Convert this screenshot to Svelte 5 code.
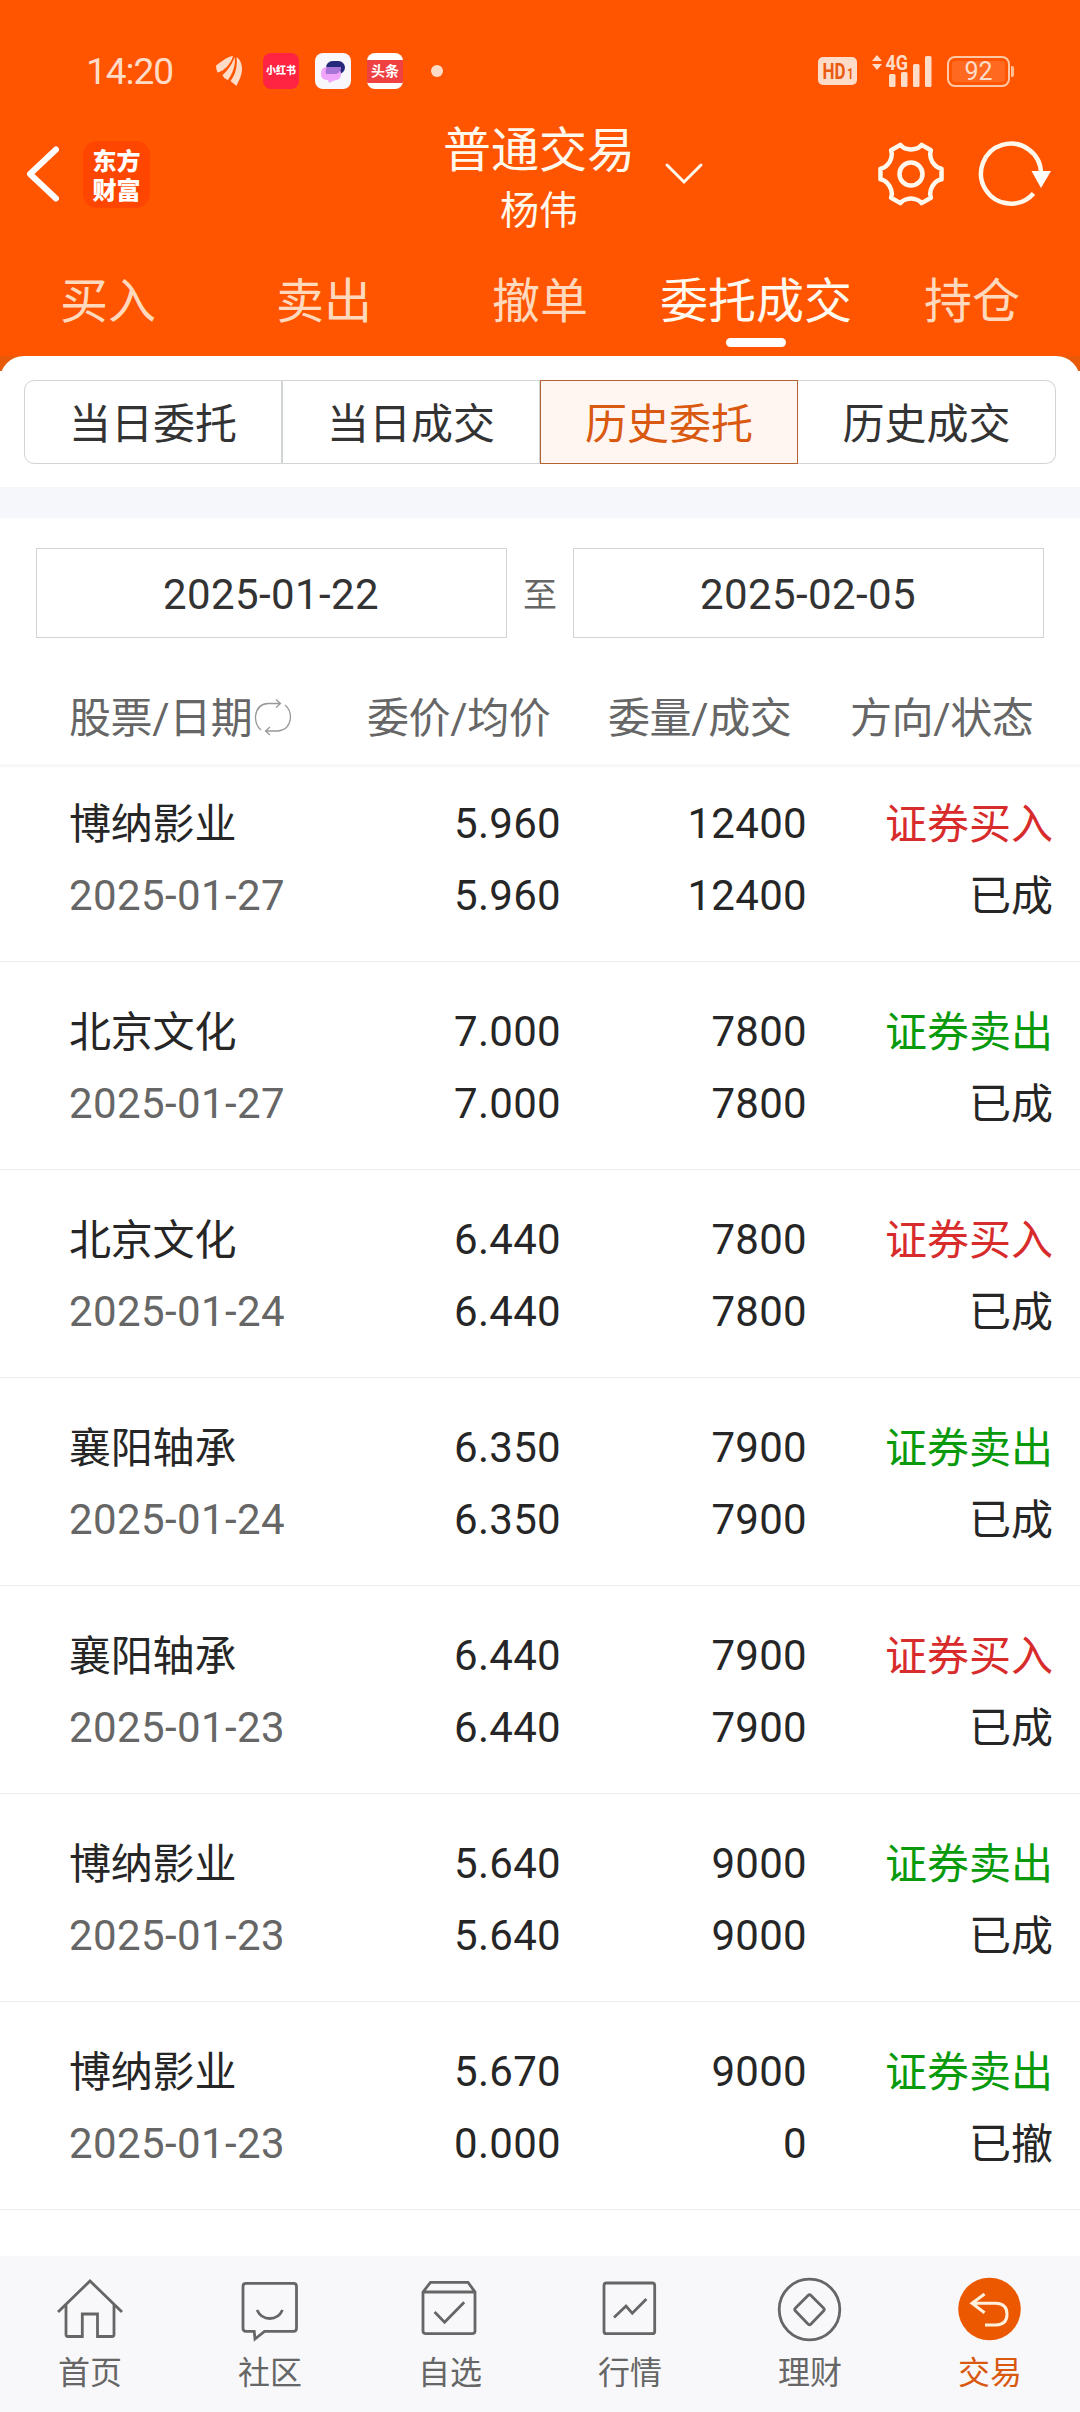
<script>
  const tabs = ['买入', '卖出', '撤单', '委托成交', '持仓'];
  const segments = ['当日委托', '当日成交', '历史委托', '历史成交'];
  const orders = [
    { name: '博纳影业', date: '2025-01-27', price: '5.960', avg: '5.960', qty: '12400', done: '12400', side: 'buy', status: '已成' },
    { name: '北京文化', date: '2025-01-27', price: '7.000', avg: '7.000', qty: '7800', done: '7800', side: 'sell', status: '已成' },
    { name: '北京文化', date: '2025-01-24', price: '6.440', avg: '6.440', qty: '7800', done: '7800', side: 'buy', status: '已成' },
    { name: '襄阳轴承', date: '2025-01-24', price: '6.350', avg: '6.350', qty: '7900', done: '7900', side: 'sell', status: '已成' },
    { name: '襄阳轴承', date: '2025-01-23', price: '6.440', avg: '6.440', qty: '7900', done: '7900', side: 'buy', status: '已成' },
    { name: '博纳影业', date: '2025-01-23', price: '5.640', avg: '5.640', qty: '9000', done: '9000', side: 'sell', status: '已成' },
    { name: '博纳影业', date: '2025-01-23', price: '5.670', avg: '0.000', qty: '9000', done: '0', side: 'sell', status: '已撤' }
  ];
  const nav = ['首页', '社区', '自选', '行情', '理财', '交易'];

  // Six-toothed gear outline: tooth corners joined by concave curves
  const gear = (() => {
    const pt = (r, deg) => {
      const a = (deg * Math.PI) / 180;
      return `${(34 + r * Math.cos(a)).toFixed(2)} ${(34 + r * Math.sin(a)).toFixed(2)}`;
    };
    let d = '';
    for (let i = 0; i < 6; i++) {
      const c = i * 60;
      d += `${i ? 'L' : 'M'}${pt(31, c - 10)}L${pt(31, c + 10)}`;
      d += `Q${pt(27, c + 13)} ${pt(25.4, c + 21)}Q${pt(24, c + 30)} ${pt(25.4, c + 39)}Q${pt(27, c + 47)} ${pt(31, c + 50)}`;
    }
    return d + 'Z';
  })();
</script>

<div class="screen">
  <header>
    <div class="status">
      <span class="time">14:20</span>
      <svg class="leaf" viewBox="0 0 26 30">
        <path d="M17 0C10 1 4 7 0 9.500Q0 13 1.500 16.500C8 15 15 8 17 0Z" />
        <path d="M18.500 1C16 9 11 15 6.500 19Q8 23 12 24C17 17 20 8 18.500 1Z" />
        <path d="M20.500 1C24 3 26 8 26 13C26 20 22 26 20.500 30L14.500 25C20 18 21.500 9 20.500 1Z" />
      </svg>
      <span class="app xhs">小红书</span>
      <svg class="app" viewBox="0 0 36 36">
        <rect width="36" height="36" rx="8" fill="#f8f7fc" />
        <rect x="11" y="8" width="19" height="13" rx="6.5" fill="#26287c" />
        <path d="M12 14H19Q26 14 26 21Q26 27 19 27.500L14 30L13 27Q6 27 6 21Q6 14 12 14Z" fill="#f0a5fb" />
        <path d="M12 14H26V16Q24 21 20 21H11Q10 16 12 14Z" fill="#a874d8" />
      </svg>
      <span class="app news"><b>头条</b></span>
      <i class="dot"></i>
      <div class="spacer"></div>
      <svg class="hd" viewBox="0 0 39 28">
        <rect width="39" height="28" rx="5" />
        <text x="4.500" y="22" textLength="23" lengthAdjust="spacingAndGlyphs">HD</text>
        <text class="sm" x="29" y="22" textLength="6.500" lengthAdjust="spacingAndGlyphs">1</text>
      </svg>
      <svg class="signal" viewBox="0 0 60 34">
        <path d="M0 7L5 1L10 7ZM0 10H10L5 16Z" />
        <rect x="17" y="20" width="6.500" height="13" rx="1.500" />
        <rect x="29" y="18" width="6.500" height="15" rx="1.500" />
        <rect x="41" y="10" width="6.500" height="23" rx="1.500" />
        <rect x="53" y="2" width="6.500" height="31" rx="1.500" />
        <text x="13.500" y="16" textLength="22.500" lengthAdjust="spacingAndGlyphs">4G</text>
      </svg>
      <span class="battery"><span>92</span></span><i class="cap"></i>
    </div>

    <div class="bar">
      <div class="left">
        <svg class="back" viewBox="0 0 36 60"><path d="M31 5.500L5 30L31 54.500" /></svg>
        <div class="logo">东方<br />财富</div>
      </div>
      <div class="title">
        <h1>普通交易</h1>
        <p>杨伟</p>
      </div>
      <div class="right">
        <svg class="chev" viewBox="0 0 40 24"><path d="M3 3L20 20L37 3" /></svg>
        <svg class="gear" viewBox="0 0 68 68"><path d={gear} /><circle cx="34" cy="34" r="11.500" /></svg>
        <svg class="reload" viewBox="0 0 74 68"><path d="M57.500 53.500A30 30 0 1 1 65 33" /><path class="tip" d="M55.500 31H75L65 48Z" /></svg>
      </div>
    </div>

    <nav class="tabs">
      {#each tabs as t}
        <span class:on={t === '委托成交'}>{t}</span>
      {/each}
    </nav>
  </header>

  <div class="sheet">
    <section class="segs">
      {#each segments as s}
        <span class:on={s === '历史委托'}>{s}</span>
      {/each}
    </section>
  </div>
  <div class="band"></div>

  <section class="range">
    <span class="date">2025-01-22</span>
    <span class="to">至</span>
    <span class="date">2025-02-05</span>
  </section>

  <div class="thead">
    <span>股票/日期<svg viewBox="0 0 38 38"><path d="M7 32Q1 27 1.500 18Q3 6 14 5.500H26M22 1.500L26.500 5.500L22 9.500M31 7Q37 12 36.500 20Q35 32 24 33H12M16 29L11.500 33L16 37" /></svg></span>
    <span>委价/均价</span>
    <span>委量/成交</span>
    <span>方向/状态</span>
  </div>

  <main>
    {#each orders as o}
      <article>
        <div class="name"><span class="cjk">{o.name}</span><span class="day">{o.date}</span></div>
        <div><span>{o.price}</span><span>{o.avg}</span></div>
        <div><span>{o.qty}</span><span>{o.done}</span></div>
        <div class="side"><span class={o.side}>{o.side === 'buy' ? '证券买入' : '证券卖出'}</span><span>{o.status}</span></div>
      </article>
    {/each}
  </main>

  <footer>
    {#each nav as n, i}
      <div class="item" class:on={n === '交易'}>
        <svg viewBox="0 0 72 72">
          {#if i === 0}
            <path d="M4 39L36 8L68 39M12 32V61.500Q12 63.500 14 63.500H28.300V41H43.500V63.500H58Q60 63.500 60 61.500V32" />
          {:else if i === 1}
            <path d="M12 10.300H59.500Q62.500 10.300 62.500 13.300V55.300Q62.500 58.300 59.500 58.300H30.500L21 66L20.200 58.300H12Q9 58.300 9 55.300V13.300Q9 10.300 12 10.300Z" />
            <path d="M23 37Q27 45.500 35.800 45.500T48.500 37" />
          {:else if i === 2}
            <path d="M9 19L16.500 9.300H54L61 19V58Q61 60.700 58 60.700H12Q9 60.700 9 58ZM9 19H61M20.600 39L30.600 49.300L50.200 29.300" />
          {:else if i === 3}
            <rect x="10" y="10" width="50.700" height="50.700" rx="2.500" />
            <path d="M20 44.500L32 33L38.300 40.300L52.400 26" />
          {:else if i === 4}
            <circle cx="35.500" cy="36.500" r="30.300" />
            <path d="M34 22.500Q35.500 21 37 22.500L49.500 35Q51 36.500 49.500 38L37 51Q35.500 52.500 34 51L21.500 38Q20 36.500 21.500 35Z" />
          {:else}
            <circle class="disc" cx="35.500" cy="36" r="31.300" />
            <path class="arrow" d="M30.600 21L18 30.300L30.600 39.700M18.500 30.300H42Q53 30.800 53 41.200T42 52H31" />
          {/if}
        </svg>
        <span>{n}</span>
      </div>
    {/each}
  </footer>
</div>

<style>
  :global(body) { background: #fff; }
  .screen {
    width: 1080px; height: 2412px; display: flex; flex-direction: column; overflow: hidden;
    background: #fff; color: #262626;
    font: 42px/1 Roboto, "Noto Sans CJK SC", sans-serif;
  }
  * { box-sizing: border-box; }
  h1, p { margin: 0; font-weight: 400; }
  svg { display: block; flex: none; fill: none; overflow: visible; }

  header { height: 356px; flex: none; background: #ff5500; color: #fff8ec; display: flex; flex-direction: column; }
  .status { height: 106px; padding: 36px 66px 0 86px; display: flex; align-items: center; color: #ffdcc8; }
  .time { font-size: 37px; width: 130px; letter-spacing: -1px; }
  .leaf { width: 26px; height: 30px; fill: #ffdcc8; margin-right: 21px; }
  .app { width: 36px; height: 36px; margin-right: 16px; border-radius: 8px; flex: none; display: flex; align-items: center; justify-content: center; }
  .xhs { background: #ff2442; color: #fff; font-size: 10px; font-weight: 900; white-space: nowrap; }
  .news { background: #fff; overflow: hidden; }
  .news b { width: 36px; height: 23px; background: #f04142; color: #fff; font-size: 14px; line-height: 22px; text-align: center; white-space: nowrap; }
  .dot { width: 12px; height: 12px; border-radius: 50%; background: #ffdcc8; margin-left: 12px; }
  .spacer { flex: 1; }
  .hd { width: 39px; height: 28px; fill: #ffdcc8; margin-right: 15px; }
  .hd text { font: 700 22px Roboto, sans-serif; fill: #e85a10; }
  .hd .sm { font-size: 15px; }
  .signal { width: 60px; height: 34px; fill: #ffdcc8; margin-right: 15px; }
  .signal text { font: 700 21px Roboto, sans-serif; }
  .battery { width: 63px; height: 31px; border: 2px solid #ffc8a4; border-radius: 8px; padding: 3px; }
  .battery span { display: block; height: 21px; background: #ff6a20; border-radius: 3px; text-align: center; font-size: 25px; line-height: 22px; }
  .cap { width: 3px; height: 11px; background: #ffbf94; margin-left: 1px; border-radius: 0 2px 2px 0; }

  .bar { height: 136px; display: grid; grid-template-columns: 1fr 200px 1fr; align-items: center; padding: 0 27px 0 25px; }
  .left { display: flex; align-items: center; gap: 22px; }
  .back { width: 36px; height: 60px; stroke: #fff; stroke-width: 6; stroke-linecap: round; stroke-linejoin: round; }
  .logo { width: 67px; height: 67px; padding-top: 4px; border-radius: 14px; background: #ff4600; color: #fff; text-align: center; font: 900 24px/29px "Noto Sans CJK SC", sans-serif; }
  .title { text-align: center; white-space: nowrap; padding-top: 10px; }
  .title h1 { font-size: 48px; line-height: 64px; }
  .title p { font-size: 39px; line-height: 56px; }
  .right { display: flex; align-items: center; justify-content: flex-end; }
  .chev { width: 40px; height: 24px; stroke: #fff8ec; stroke-width: 3; stroke-linecap: round; margin-right: 173px; }
  .gear { width: 68px; height: 68px; stroke: #fff8ec; stroke-width: 4.5; stroke-linejoin: round; margin-right: 31px; }
  .reload { width: 74px; height: 68px; stroke: #fff8ec; stroke-width: 4.5; margin-right: 3px; }
  .reload .tip { fill: #fff; stroke: none; }

  .tabs { flex: 1; display: grid; grid-template-columns: repeat(5, 216px); }
  .tabs span { position: relative; text-align: center; white-space: nowrap; font-size: 48px; line-height: 120px; height: 114px; color: #ffd9bd; }
  .tabs .on { color: #fffaf0; }
  .tabs .on::after { content: ""; position: absolute; left: 78px; top: 96px; width: 60px; height: 9px; border-radius: 4.5px; background: #fff; }

  .sheet { height: 131px; flex: none; background: linear-gradient(#e65a0a 15px, #fff 15px); }
  .segs { height: 131px; border-radius: 24px 24px 0 0; background: #fff; padding: 24px; display: grid; grid-template-columns: repeat(4, 258px); }
  .segs span { height: 84px; border: 1px solid #d0d4d5; text-align: center; line-height: 87px; color: #333; }
  .segs span:first-child { border-radius: 10px 0 0 10px; }
  .segs span:last-child { border-radius: 0 10px 10px 0; border-left: 0; }
  .segs span.on { border-color: #b4622f; background: #fff6f2; color: #d8590f; }
  .band { height: 31px; flex: none; background: #f5f7fa; }

  .range { height: 150px; flex: none; padding: 30px 36px; display: grid; grid-template-columns: 471px 66px 471px; text-align: center; color: #333; }
  .date { height: 90px; border: 1px solid #d0d4d5; line-height: 91px; letter-spacing: 0.4px; padding-right: 1px; }
  .to { font-size: 34px; line-height: 95px; color: #666; }

  .thead { height: 99px; flex: none; padding: 5px 0 0 69px; border-bottom: 3px solid #f7f8f8; display: grid; grid-template-columns: 298px 241px 242px 230px; align-items: center; color: #666; white-space: nowrap; }
  .thead span { display: flex; align-items: center; letter-spacing: -0.4px; }
  .thead svg { width: 38px; height: 38px; stroke: #999; stroke-width: 1.3; margin: -4px 0 0 2px; }

  main { flex: 1; }
  article { height: 208px; padding: 0 27px 29px 69px; border-bottom: 1px solid #ececec; display: grid; grid-template-columns: 280px 212px 246px 246px; align-items: end; text-align: right; }
  article:first-child { height: 195px; }
  article div { display: flex; flex-direction: column; letter-spacing: 0.3px; line-height: 72px; }
  article .name { text-align: left; }
  .cjk { letter-spacing: -0.2px; padding-top: 1px; margin-bottom: -1px; }
  .day { color: #666; letter-spacing: 0.4px; }
  article .side { letter-spacing: 0; padding-top: 1px; margin-bottom: -1px; }
  .buy { color: #d82b2b; }
  .sell { color: #099a0c; }

  footer { height: 156px; flex: none; background: #f8f8fa; display: grid; grid-template-columns: repeat(6, 180px); padding-top: 17px; }
  .item { display: flex; flex-direction: column; align-items: center; font-size: 32px; line-height: 57px; color: #666; }
  .item svg { width: 72px; height: 72px; stroke: #666; stroke-width: 2.8; }
  .item.on { color: #d8590f; }
  .item .disc { fill: #eb5800; stroke: none; }
  .item .arrow { stroke: #fff0dc; stroke-width: 3; }
</style>
